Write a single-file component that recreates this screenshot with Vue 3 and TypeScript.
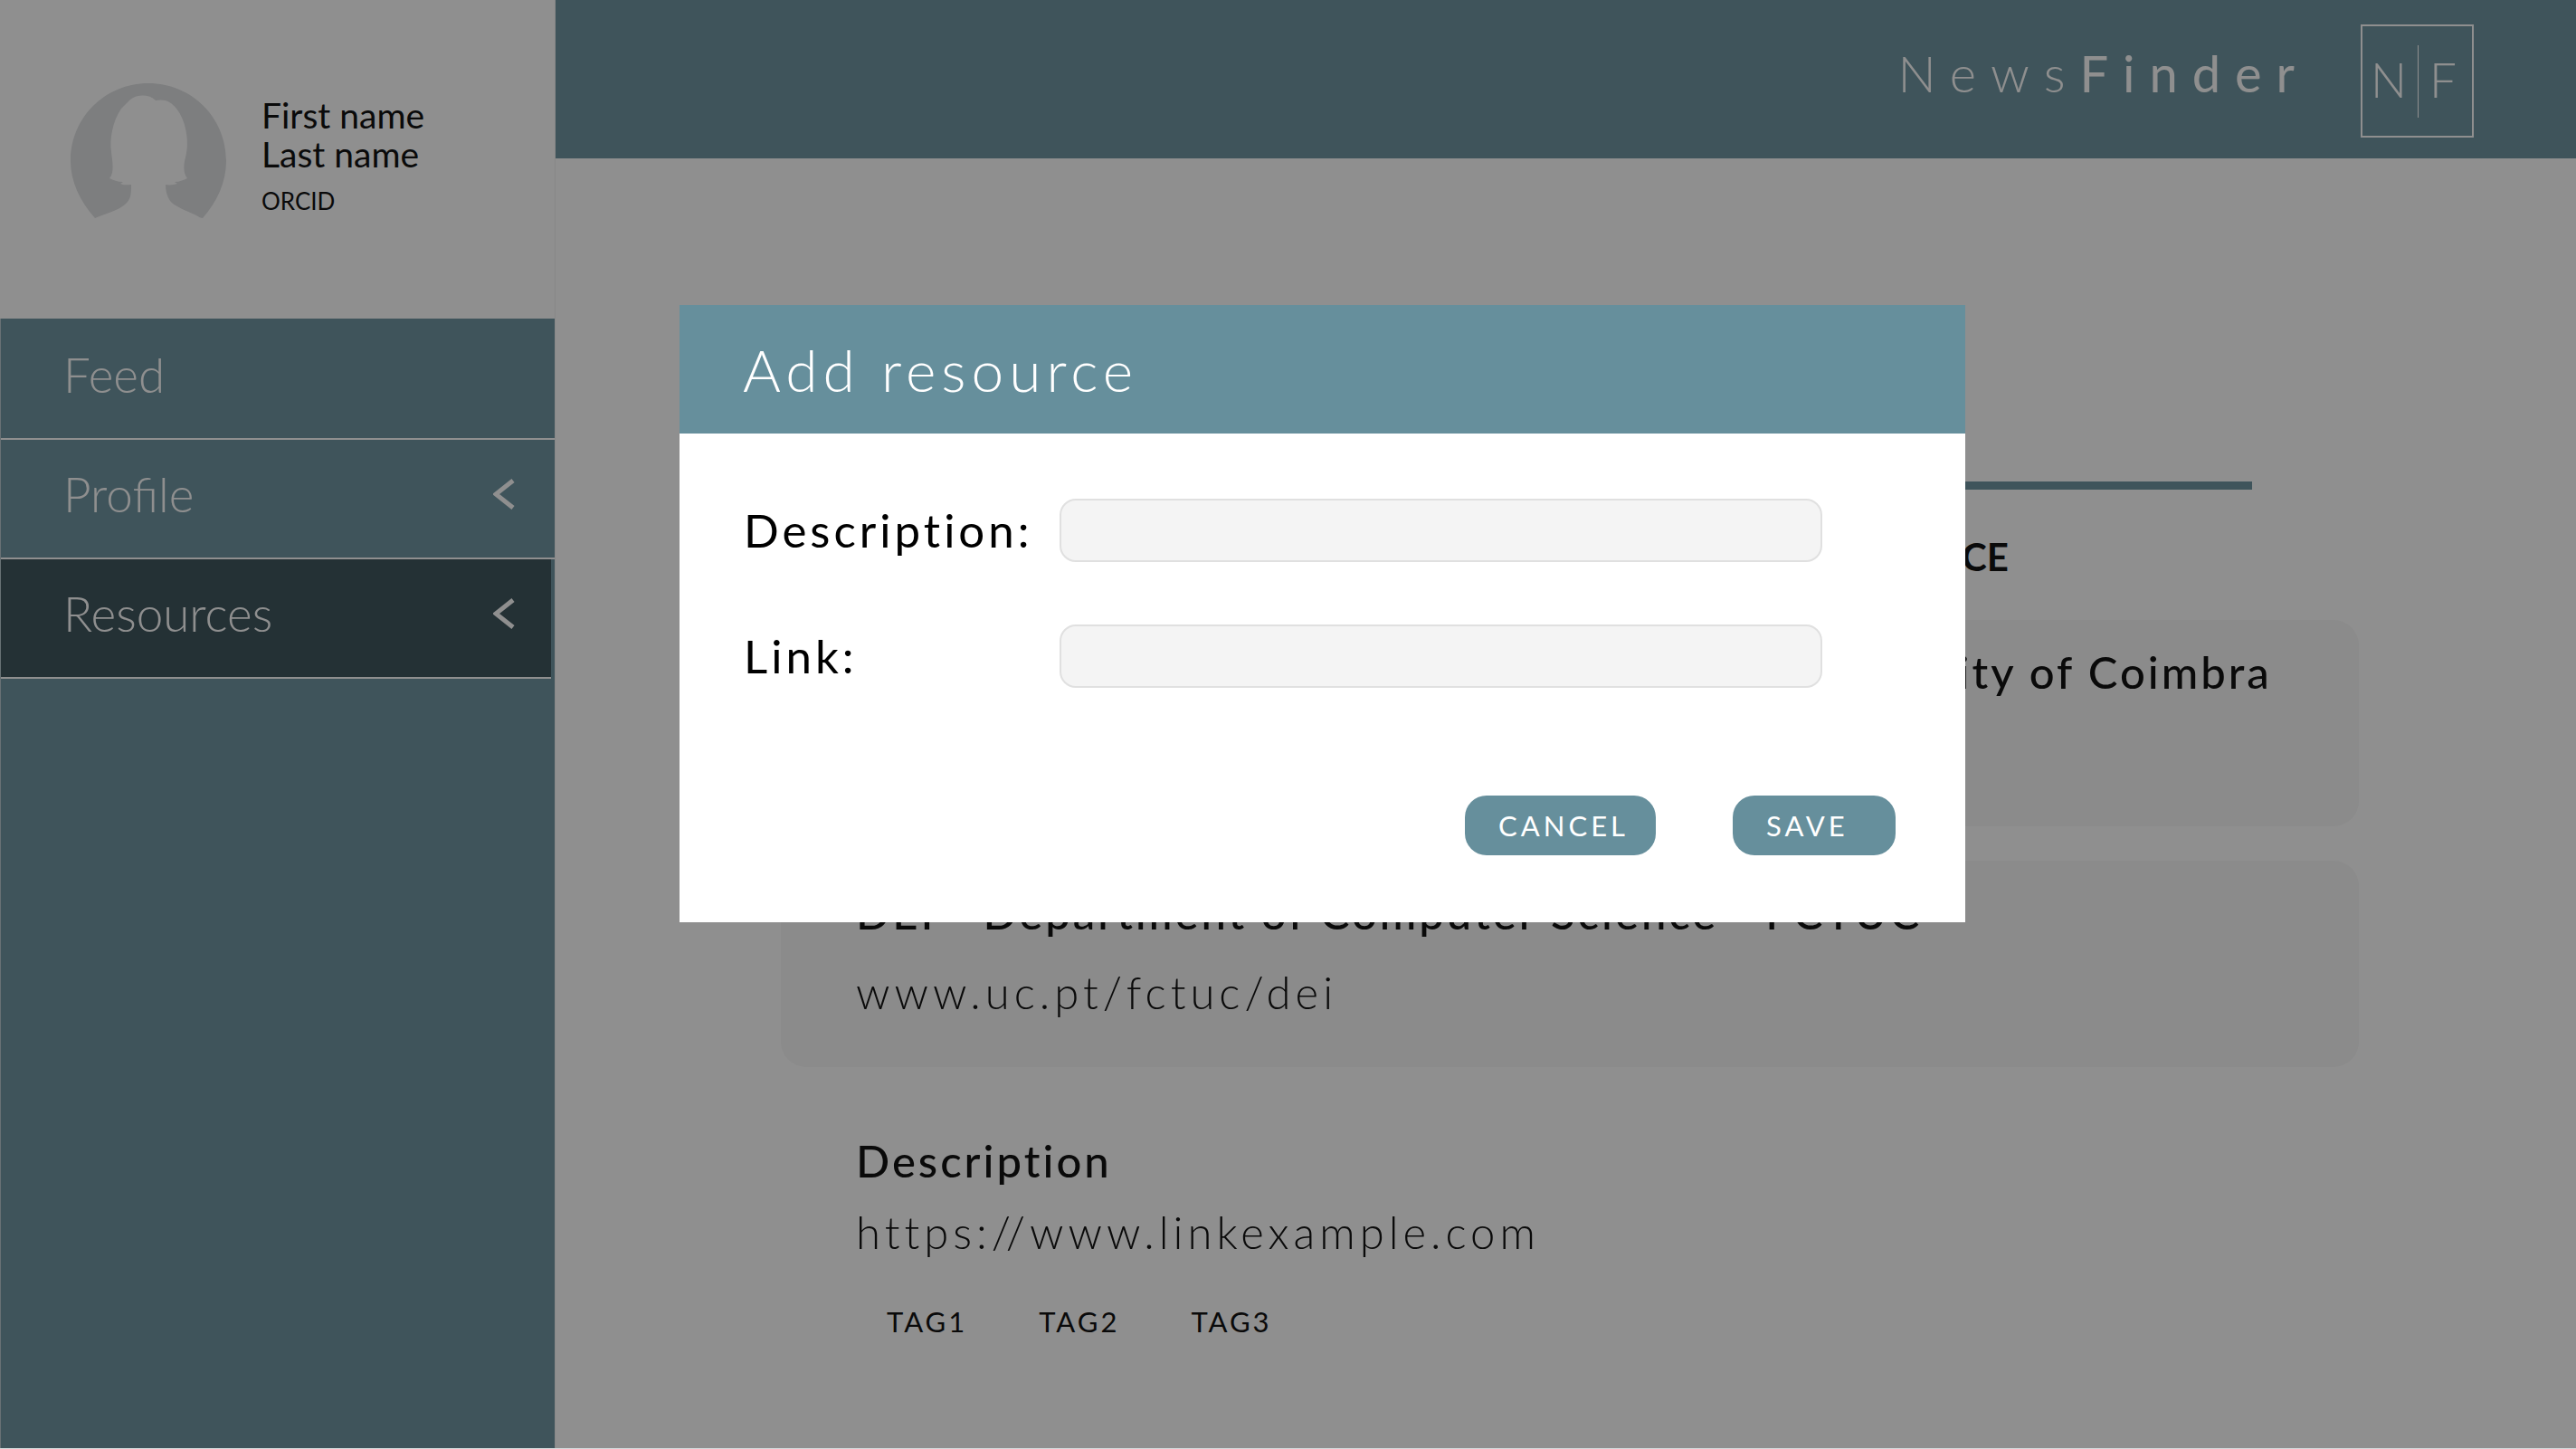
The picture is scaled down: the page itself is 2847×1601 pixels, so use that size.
<script setup lang="ts">
import { ref } from 'vue'

interface NavItem {
  label: string
  expandable: boolean
  active: boolean
}

interface Resource {
  title: string
  url: string
  tags: string[]
  plain: boolean
}

const navItems: NavItem[] = [
  { label: 'Feed', expandable: false, active: false },
  { label: 'Profile', expandable: true, active: false },
  { label: 'Resources', expandable: true, active: true },
]

const resources: Resource[] = [
  {
    title: 'Centre for Informatics and Systems of the University of Coimbra',
    url: 'www.cisuc.uc.pt',
    tags: [],
    plain: false,
  },
  {
    title: 'DEI - Department of Computer Science - FCTUC',
    url: 'www.uc.pt/fctuc/dei',
    tags: [],
    plain: false,
  },
  {
    title: 'Description',
    url: 'https://www.linkexample.com',
    tags: ['TAG1', 'TAG2', 'TAG3'],
    plain: true,
  },
]

const description = ref('')
const link = ref('')
</script>

<template>
  <div class="page">
    <aside class="sidebar">
      <div class="profile">
        <svg class="avatar" viewBox="0 0 172 150" aria-hidden="true">
          <path
            fill="#dcdee0"
            d="M27 149 C10 130 0 108 0 86 C0 38 38 0 86 0 C134 0 172 38 172 86 C172 109 162 131 146 149 C144 149 142 148 139 146 C126 140 115 136 110 130 C106 124 105 118 105 112 C110 113 114 112 118 111 L115 109 C120 109 125 107 129 105 C124 99 125 89 127 82 C132 64 127 40 117 28 C111 20 104 17 94 19 C87 12 74 12 66 18 L56 28 C46 43 43 62 45 76 C46 86 49 98 43 105 C47 107 52 109 58 109 L55 111 C59 113 63 112 67 112 C67 120 67 126 63 131 C57 139 42 143 27 149 Z"
          />
        </svg>
        <div class="identity">
          <div class="person">First name<br />Last name</div>
          <div class="orcid">ORCID</div>
        </div>
      </div>
      <nav class="nav">
        <a
          v-for="item in navItems"
          :key="item.label"
          href="#"
          class="nav-item"
          :class="{ active: item.active }"
        >
          <span>{{ item.label }}</span>
          <svg v-if="item.expandable" class="chevron" viewBox="0 0 24 34" aria-hidden="true">
            <path d="M22 2 L3 17 L22 32" fill="none" stroke="#ffffff" stroke-width="5" />
          </svg>
        </a>
      </nav>
    </aside>

    <div class="main">
      <header class="topbar">
        <div class="brand">News<span class="brand-strong">Finder</span></div>
        <div class="logo">
          <span class="logo-letter">N</span>
          <span class="logo-bar"></span>
          <span class="logo-letter">F</span>
        </div>
      </header>
      <main class="content">
        <div class="rule"></div>
        <button type="button" class="add">ADD RESOURCE</button>
        <section
          v-for="item in resources"
          :key="item.title"
          class="card"
          :class="{ plain: item.plain }"
        >
          <h2 class="card-title">{{ item.title }}</h2>
          <a href="#" class="card-url">{{ item.url }}</a>
          <div v-if="item.tags.length" class="tags">
            <span v-for="tag in item.tags" :key="tag" class="tag">{{ tag }}</span>
          </div>
        </section>
      </main>
    </div>

    <div class="overlay">
      <form class="modal" role="dialog" aria-labelledby="modal-title" @submit.prevent>
        <h1 id="modal-title" class="modal-title">Add resource</h1>
        <div class="fields">
          <div class="field">
            <label for="description">Description:</label>
            <input id="description" v-model="description" type="text" />
          </div>
          <div class="field">
            <label for="link">Link:</label>
            <input id="link" v-model="link" type="text" />
          </div>
        </div>
        <div class="actions">
          <button type="button" class="action">CANCEL</button>
          <button type="submit" class="action">SAVE</button>
        </div>
      </form>
    </div>
  </div>
</template>

<style>
body {
  margin: 0;
}
</style>

<style scoped>
.page {
  position: relative;
  display: flex;
  min-height: 100vh;
  box-sizing: border-box;
  border-bottom: 1px solid #d3dadc;
  background: #ffffff;
  color: #000000;
  font-family: Lato, 'Open Sans', sans-serif;
  font-weight: 300;
}

a {
  color: inherit;
  text-decoration: none;
}

button,
input {
  font: inherit;
  color: inherit;
}

.sidebar {
  flex: none;
  display: flex;
  flex-direction: column;
  width: 614px;
  box-sizing: border-box;
  border-right: 1px solid #f0f0f0;
}

.profile {
  display: flex;
  align-items: flex-start;
  gap: 39px;
  height: 352px;
  padding: 92px 0 0 78px;
  box-sizing: border-box;
}

.avatar {
  width: 172px;
  height: 150px;
}

.identity {
  padding-top: 14px;
  font-weight: 400;
}

.person {
  font-size: 39px;
  line-height: 43px;
}

.orcid {
  margin-top: 15px;
  font-size: 26px;
  line-height: 30px;
}

.nav {
  flex: 1;
  padding-top: 2px;
  background: #668f9c;
  border-left: 1px solid #b4c6cc;
  color: #ffffff;
}

.nav-item {
  display: flex;
  align-items: center;
  justify-content: space-between;
  height: 132px;
  padding: 0 44px 10px 69px;
  box-sizing: border-box;
  border-bottom: 2px solid #ffffff;
  font-size: 53px;
  line-height: 60px;
}

.nav-item.active {
  margin-right: 4px;
  padding-right: 40px;
  background: #324b54;
}

.chevron {
  width: 24px;
  height: 34px;
}

.main {
  flex: 1;
  min-width: 0;
}

.topbar {
  display: flex;
  justify-content: flex-end;
  align-items: flex-start;
  gap: 57px;
  height: 175px;
  padding: 27px 113px 0 0;
  box-sizing: border-box;
  background: #668f9c;
  color: #ffffff;
}

.brand {
  padding-top: 21px;
  font-size: 56px;
  line-height: 66px;
  font-weight: 300;
  letter-spacing: 16px;
}

.brand-strong {
  font-weight: 400;
}

.logo {
  display: flex;
  align-items: center;
  justify-content: center;
  gap: 12px;
  width: 125px;
  height: 125px;
  padding-right: 8px;
  box-sizing: border-box;
  border: 2px solid #ffffff;
  font-size: 53px;
  line-height: 60px;
  font-weight: 300;
}

.logo-letter {
  padding-bottom: 4px;
}

.logo-bar {
  width: 1px;
  height: 80px;
  background: #ffffff;
}

.content {
  display: flex;
  flex-direction: column;
  padding: 357px 240px 0 249px;
}

.rule {
  height: 9px;
  margin-right: 118px;
  background: #668f9c;
}

.add {
  align-self: flex-end;
  margin: 49px 387px 45px 0;
  padding: 0;
  border: 0;
  background: none;
  font-size: 42px;
  line-height: 50px;
  font-weight: 700;
  white-space: nowrap;
}

.card {
  height: 228px;
  margin-bottom: 38px;
  padding: 27px 83px 0;
  box-sizing: border-box;
  border-radius: 28px;
  background: #f7f7f7;
  font-size: 49px;
  line-height: 60px;
}

.card-title {
  margin: 0 0 28px;
  font-size: inherit;
  font-weight: 500;
  letter-spacing: 3px;
  white-space: nowrap;
}

.card-url {
  display: block;
  letter-spacing: 5px;
}

.card.plain {
  height: auto;
  margin: 8px 0 0;
  background: none;
}

.plain .card-title {
  margin-bottom: 19px;
}

.tags {
  display: flex;
  gap: 79px;
  margin-top: 49px;
  padding-left: 34px;
  font-size: 31px;
  line-height: 40px;
  font-weight: 400;
  letter-spacing: 3px;
}

.overlay {
  position: absolute;
  inset: 0;
  display: flex;
  align-items: flex-start;
  padding: 337px 675px 0 751px;
  background: rgba(21, 21, 21, 0.478);
}

.modal {
  flex: 1;
  min-width: 0;
  background: #ffffff;
}

.modal-title {
  margin: 0;
  padding: 36px 70px 34px;
  background: #668f9c;
  color: #ffffff;
  font-size: 64px;
  line-height: 72px;
  font-weight: 300;
  letter-spacing: 6px;
}

.fields {
  display: flex;
  flex-direction: column;
  gap: 69px;
  padding: 72px 158px 0 71px;
}

.field {
  display: flex;
  align-items: center;
}

.field label {
  flex: none;
  width: 349px;
  font-size: 51px;
  line-height: 60px;
  font-weight: 400;
  letter-spacing: 4px;
}

.field input {
  flex: 1;
  min-width: 0;
  height: 70px;
  padding: 0 20px;
  box-sizing: border-box;
  border: 2px solid #e0e0e0;
  border-radius: 18px;
  background: #f4f4f4;
  font-size: 39px;
}

.actions {
  display: flex;
  justify-content: flex-end;
  gap: 85px;
  padding: 119px 77px 74px;
}

.action {
  min-width: 180px;
  height: 66px;
  padding: 0 30px 0 37px;
  border: 0;
  border-radius: 24px;
  background: #668f9c;
  color: #ffffff;
  font-size: 31px;
  line-height: 40px;
  font-weight: 400;
  letter-spacing: 4px;
  text-align: left;
}
</style>
